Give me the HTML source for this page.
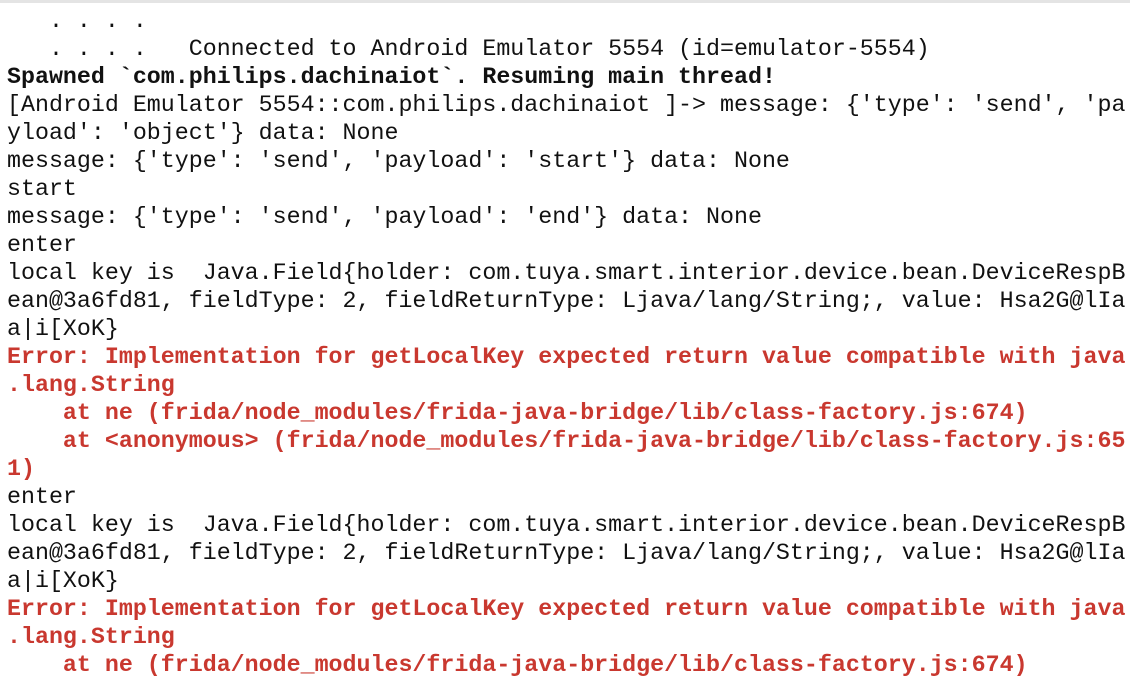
<!DOCTYPE html>
<html><head><meta charset="utf-8"><style>
html,body{margin:0;padding:0;background:#fff;width:1130px;height:684px;overflow:hidden}
.top{position:absolute;left:0;top:0;width:1130px;height:3px;background:#e4e4e4}
pre{position:absolute;left:7px;top:7px;margin:0;font-family:"Liberation Mono",monospace;font-size:23.3px;line-height:28px;color:#111;white-space:pre}
b{font-weight:bold}
.r{color:#c9382f;font-weight:bold}
</style></head><body><div class="top"></div><pre>   . . . .
   . . . .   Connected to Android Emulator 5554 (id=emulator-5554)
<b>Spawned `com.philips.dachinaiot`. Resuming main thread!</b>
[Android Emulator 5554::com.philips.dachinaiot ]-> message: {'type': 'send', 'pa
yload': 'object'} data: None
message: {'type': 'send', 'payload': 'start'} data: None
start
message: {'type': 'send', 'payload': 'end'} data: None
enter
local key is  Java.Field{holder: com.tuya.smart.interior.device.bean.DeviceRespB
ean@3a6fd81, fieldType: 2, fieldReturnType: Ljava/lang/String;, value: Hsa2G@lIa
a|i[XoK}
<span class="r">Error: Implementation for getLocalKey expected return value compatible with java
.lang.String
    at ne (frida/node_modules/frida-java-bridge/lib/class-factory.js:674)
    at &lt;anonymous&gt; (frida/node_modules/frida-java-bridge/lib/class-factory.js:65
1)</span>
enter
local key is  Java.Field{holder: com.tuya.smart.interior.device.bean.DeviceRespB
ean@3a6fd81, fieldType: 2, fieldReturnType: Ljava/lang/String;, value: Hsa2G@lIa
a|i[XoK}
<span class="r">Error: Implementation for getLocalKey expected return value compatible with java
.lang.String
    at ne (frida/node_modules/frida-java-bridge/lib/class-factory.js:674)</span></pre></body></html>
